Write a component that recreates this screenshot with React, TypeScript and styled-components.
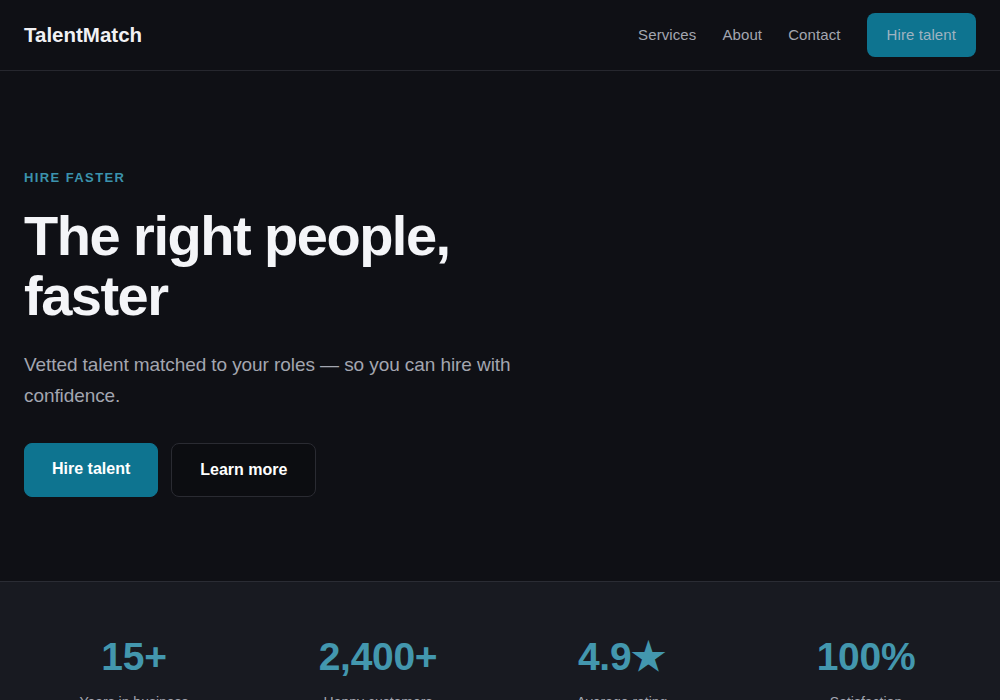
import React from "react";
import styled, { createGlobalStyle } from "styled-components";

const Global = createGlobalStyle`
  * { box-sizing: border-box; }
  html, body { margin: 0; padding: 0; background: #0f1015; }
  body { font-family: "Liberation Sans", Arial, sans-serif; color: #f4f4f6; }
`;

const Page = styled.div`
  min-height: 700px;
  background: #0f1015;
`;

const Nav = styled.header`
  height: 71px;
  display: flex;
  align-items: center;
  justify-content: space-between;
  padding: 0 24px;
  border-bottom: 1px solid #26272e;
`;

const Logo = styled.div`
  font-size: 20.5px;
  font-weight: 700;
  color: #f1f1f4;
  margin-top: -1px;
`;

const Links = styled.nav`
  display: flex;
  align-items: center;
  gap: 26px;
`;

const NavLink = styled.a`
  font-size: 15px;
  color: #a3a6b0;
  text-decoration: none;
  letter-spacing: 0.1px;
  margin-top: -2px;
`;

const NavButton = styled.a`
  display: inline-flex;
  align-items: center;
  justify-content: center;
  height: 44px;
  padding: 0 20px 2px;
  border-radius: 8px;
  background: #0e7490;
  color: #9fb3c0;
  font-size: 15px;
  text-decoration: none;
  letter-spacing: 0.1px;
`;

const Hero = styled.section`
  padding: 99px 24px 84px;
  height: 510px;
`;

const HeroInner = styled.div`
  max-width: 540px;
`;

const Eyebrow = styled.div`
  font-size: 13px;
  font-weight: 700;
  letter-spacing: 1.4px;
  color: #3b93ad;
  text-transform: uppercase;
  line-height: 16px;
`;

const Title = styled.h1`
  margin: 20px 0 0;
  font-size: 56px;
  line-height: 60px;
  font-weight: 700;
  letter-spacing: -1.5px;
  color: #f4f5f8;
`;

const Lead = styled.p`
  margin: 23px 0 0;
  font-size: 19px;
  line-height: 31px;
  letter-spacing: -0.08px;
  color: #a3a6b0;
`;

const Actions = styled.div`
  display: flex;
  gap: 13px;
  margin-top: 32px;
`;

const Button = styled.a<{ $primary?: boolean }>`
  display: inline-flex;
  align-items: center;
  justify-content: center;
  height: 54px;
  padding: ${(p) => (p.$primary ? "0 27px 2px" : "0 28px")};
  border-radius: 8px;
  font-size: 16px;
  font-weight: 700;
  color: #ffffff;
  text-decoration: none;
  background: ${(p) => (p.$primary ? "#0e7490" : "#0c0d11")};
  border: 1px solid ${(p) => (p.$primary ? "#0e7490" : "#2a2b32")};
`;

const Stats = styled.section`
  background: #181a21;
  border-top: 1px solid #2a2c34;
  padding: 53px 24px 40px;
  display: grid;
  grid-template-columns: repeat(4, 1fr);
  gap: 24px;
`;

const Stat = styled.div`
  text-align: center;
`;

const StatValue = styled.div`
  font-size: 39px;
  font-weight: 700;
  line-height: 44px;
  color: #4397ae;
  letter-spacing: -0.3px;
`;

const StatLabel = styled.div`
  margin-top: 15px;
  font-size: 14px;
  color: #a3a6b0;
`;

const stats = [
  { value: "15+", label: "Years in business" },
  { value: "2,400+", label: "Happy customers" },
  { value: "4.9★", label: "Average rating" },
  { value: "100%", label: "Satisfaction" },
];

export default function App() {
  return (
    <Page>
      <Global />
      <Nav>
        <Logo>TalentMatch</Logo>
        <Links>
          <NavLink href="#">Services</NavLink>
          <NavLink href="#">About</NavLink>
          <NavLink href="#">Contact</NavLink>
          <NavButton href="#">Hire talent</NavButton>
        </Links>
      </Nav>
      <Hero>
        <HeroInner>
          <Eyebrow>Hire faster</Eyebrow>
          <Title>The right people, faster</Title>
          <Lead>Vetted talent matched to your roles — so you can hire with confidence.</Lead>
          <Actions>
            <Button $primary href="#">Hire talent</Button>
            <Button href="#">Learn more</Button>
          </Actions>
        </HeroInner>
      </Hero>
      <Stats>
        {stats.map((s) => (
          <Stat key={s.label}>
            <StatValue>{s.value}</StatValue>
            <StatLabel>{s.label}</StatLabel>
          </Stat>
        ))}
      </Stats>
    </Page>
  );
}
